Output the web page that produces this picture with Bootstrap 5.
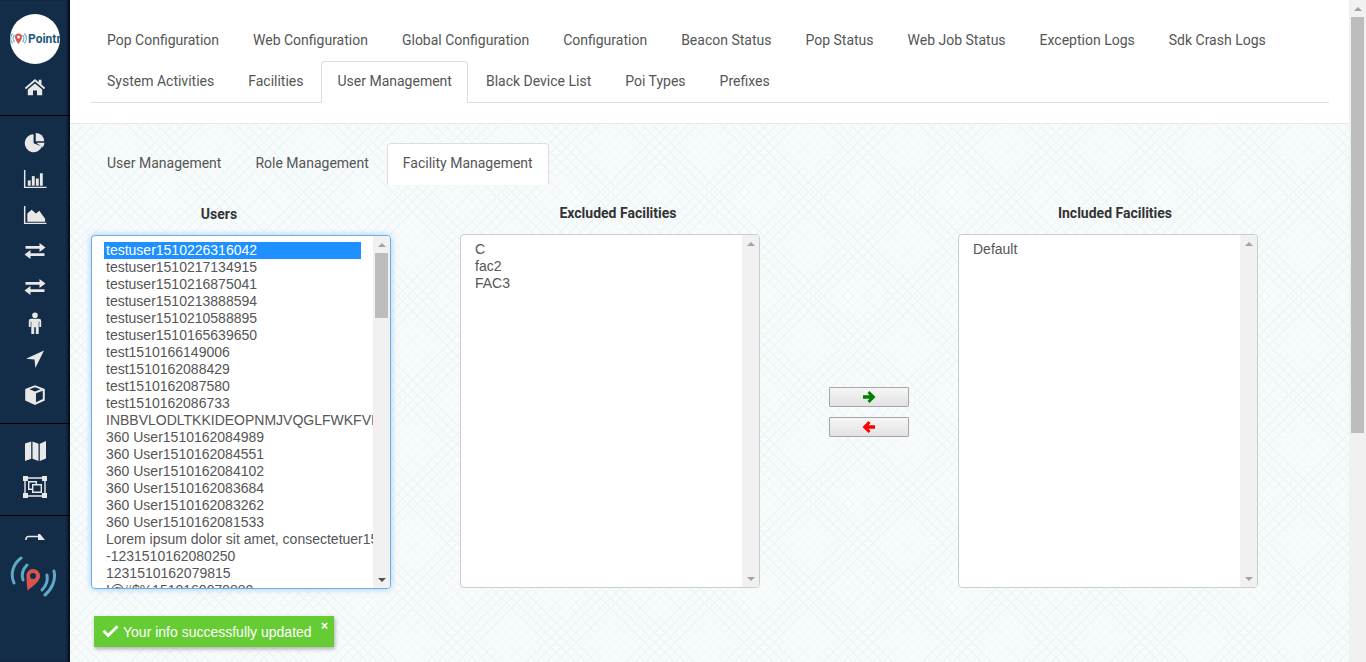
<!DOCTYPE html>
<html lang="en">
<head>
  <meta charset="UTF-8">
  <meta name="viewport" content="width=device-width, initial-scale=1.0">
  <title>User Management - Pointr</title>
  <link href="https://cdn.jsdelivr.net/npm/bootstrap@5.3.0/dist/css/bootstrap.min.css" rel="stylesheet">
  <style>
    html, body { height: 100%; overflow: hidden; }
    body {
      font-family: Roboto, "Liberation Sans", sans-serif;
      font-size: 14px;
      line-height: 20px;
      color: #555;
      background: #fff;
    }
    .page-wrap { height: 662px; }

    /* left rail */
    .side-rail {
      width: 70px;
      flex: none;
      background: #132c47;
      box-shadow: inset -3px 0 3px -1px rgba(0, 0, 0, .75);
      overflow: hidden;
    }
    .rail-group { border-bottom: 1px solid #000; }
    .rail-head { height: 116px; padding-top: 14px; }
    .rail-mid { height: 308px; padding-top: 9px; }
    .rail-maps { height: 92px; padding-top: 9px; }
    .rail-foot { padding-top: 18px; }
    .rail-item { width: 69px; height: 36px; }
    .rail-item svg { width: 24px; height: 24px; fill: #e8e8e8; }
    .rail-clip { width: 69px; height: 6px; overflow: hidden; margin-bottom: 16px; }
    .logo-disc {
      width: 50px;
      height: 50px;
      margin: 0 0 5px 10px;
      border-radius: 50%;
      background: #fff;
      overflow: hidden;
    }
    .logo-disc svg { width: 19px; height: 16px; flex: none; margin-left: -1px; }
    .logo-word {
      font-size: 12px;
      line-height: 16px;
      font-weight: 700;
      color: #25597a;
      white-space: nowrap;
    }
    .pin-logo { width: 46px; height: 42px; margin-left: 10px; display: block; }

    /* main column */
    .top-band {
      background: #fff;
      padding: 20px 20px 20px 21px;
      border-bottom: 1px solid #e8e8e8;
    }
    .hatch-band {
      padding: 19px 0 0 21px;
      background-color: #f8fbfc;
      background-image:
        repeating-linear-gradient(45deg, #eef5f7 0, #eef5f7 1px, transparent 1px, transparent 7px),
        repeating-linear-gradient(-45deg, #eef5f7 0, #eef5f7 1px, transparent 1px, transparent 7px);
    }
    .tab-set { --bs-nav-tabs-border-color: #ddd; }
    .tab-set .nav-link {
      padding: 9px 15px 11px;
      margin-right: 2px;
      color: #555;
      border-radius: 4px 4px 0 0;
    }
    .tab-set .nav-link.active { color: #555; background: #fff; border-color: #ddd #ddd #fff; }
    .tab-set.tab-flat { border-bottom: 0; }

    .pick-col { width: 300px; flex: none; }
    .users-col { padding-top: 20px; margin-right: 69px; }
    .excl-col { padding-top: 19px; }
    .incl-col { padding-top: 19px; }
    .pick-title { font-weight: 700; color: #333; margin-bottom: 11px; text-align: center; white-space: nowrap; }
    .users-col .pick-title { width: 256px; }
    .excl-col .pick-title { width: 316px; }
    .incl-col .pick-title { width: 314px; }
    .move-col { width: 80px; flex: none; margin: 0 49px 0 69px; padding-top: 203px; }

    .pick-box {
      height: 354px;
      background: #fff;
      border: 1px solid #ccc;
      border-radius: 4px;
      overflow: hidden;
      font-family: "Liberation Sans", Arial, sans-serif;
      line-height: 17px;
    }
    .pick-box.is-focused {
      border-color: #66afe9;
      box-shadow: 0 0 6px rgba(102, 175, 233, .6);
    }
    .pick-list { padding: 6px 12px; overflow: hidden; flex: 1 1 0; min-width: 0; }
    .pick-row { padding: 0 2px; white-space: nowrap; color: #555; }
    .pick-row.is-picked { background: #1e90ff; color: #fff; }

    .mini-scroll { width: 17px; flex: none; background: #f1f1f1; }
    .scroll-up, .scroll-down { height: 17px; flex: none; }
    .scroll-up::before, .scroll-down::before {
      content: "";
      border-left: 4px solid transparent;
      border-right: 4px solid transparent;
    }
    .scroll-up::before { border-bottom: 4px solid #a3a3a3; }
    .scroll-down::before { border-top: 4px solid #505050; }
    .scroll-down.is-off::before { border-top-color: #a3a3a3; }
    .scroll-track { flex: 1 1 0; }
    .scroll-thumb { margin: 0 2px; background: #bdbdbd; }
    .list-thumb { height: 65px; }

    .move-btn {
      --bs-btn-padding-y: 0;
      --bs-btn-padding-x: 0;
      width: 80px;
      height: 20px;
      margin-bottom: 10px;
      border: 1px solid #a6a6a6;
      border-radius: 1px;
      background: linear-gradient(#f6f6f6, #e2e2e2);
    }
    .move-btn svg { width: 14px; height: 14px; display: block; }
    .go-right { fill: #008000; }
    .go-left { fill: #ff0000; }

    /* page scrollbar */
    .page-scroll { width: 17px; flex: none; background: #f1f1f1; }
    .page-thumb { height: 416px; margin: 0 2px; background: #bdbdbd; }

    .saved-note {
      left: 94px;
      top: 616px;
      width: 240px;
      height: 31px;
      background: #66cc33;
      color: #fff;
      font-family: "Liberation Sans", Arial, sans-serif;
      box-shadow: 1px 2px 4px rgba(0, 0, 0, .3);
      padding-left: 8px;
    }
    .saved-note svg { width: 17px; height: 17px; margin-right: 4px; fill: #fff; }
    .saved-close {
      right: 6px;
      top: 2px;
      font-size: 12px;
      font-weight: 700;
      line-height: 16px;
    }
  </style>
</head>
<body>
  <div class="page-wrap d-flex">
    <aside class="side-rail d-flex flex-column">
      <div class="rail-group rail-head">
        <div class="logo-disc d-flex align-items-center">
          <svg viewBox="0 0 19 16" aria-hidden="true">
            <g fill="none" stroke="#6fb0cc" stroke-width="1.3">
              <path d="M3.5 2.5a8 8 0 0 0 0 10"/>
              <path d="M15.5 2.5a8 8 0 0 1 0 10"/>
              <path d="M5.6 4a5 5 0 0 0 0 7"/>
              <path d="M13.4 4a5 5 0 0 1 0 7"/>
            </g>
            <path fill="#d9534f" d="M9.500 2.500a3.500 3.500 0 0 1 3.500 3.500c0 2.500-3.500 7-3.500 7s-3.500-4.500-3.500-7a3.500 3.500 0 0 1 3.500-3.500zm0 2a1.500 1.500 0 1 0 0 3 1.500 1.500 0 0 0 0-3z"/>
          </svg>
          <span class="logo-word">Pointr</span>
        </div>
        <div class="rail-item d-flex align-items-center justify-content-center">
          <svg viewBox="0 0 24 24" aria-hidden="true"><path d="M12 4 1.800 12.800l1.200 1.400L12 6.600l9 7.600 1.200-1.400-3.700-3.200V4.800h-2.800v2.500z"/><path d="M4.800 14.500 12 8.400l7.200 6.100v5.700H14v-4.600h-4v4.600H4.800z"/></svg>
        </div>
      </div>
      <div class="rail-group rail-mid">
        <div class="rail-item d-flex align-items-center justify-content-center">
          <svg viewBox="0 0 24 25.500" aria-hidden="true"><path d="M10.500 13V3.500a9.500 9.500 0 1 0 8.900 13z"/><path d="M12.800 2a9 9 0 0 1 9 8.800h-9z"/><path d="M13.400 12.500h8.600a9 9 0 0 1-1.800 5z"/></svg>
        </div>
        <div class="rail-item d-flex align-items-center justify-content-center">
          <svg viewBox="0 0 24 25" aria-hidden="true"><path d="M.500 3H2v17.500h22V22H.500z"/><rect x="4.500" y="14" width="3" height="5.500"/><rect x="8.700" y="9.500" width="3" height="10"/><rect x="12.900" y="12" width="3" height="7.500"/><rect x="17.100" y="6.500" width="3" height="13"/></svg>
        </div>
        <div class="rail-item d-flex align-items-center justify-content-center">
          <svg viewBox="0 0 24 25" aria-hidden="true"><path d="M.500 3H2v17.500h22V22H.500z"/><path d="M4 19.500V11l4.500-4 4.500 4 3.500-3 6 8.500v3z"/></svg>
        </div>
        <div class="rail-item d-flex align-items-center justify-content-center">
          <svg viewBox="0 0 24 24" aria-hidden="true"><path d="M2.500 7h14V4l6 4.500-6 4.500v-3.200h-14z"/><path d="M21.500 14.200h-14V11l-6 4.600 6 4.400v-3h14z"/></svg>
        </div>
        <div class="rail-item d-flex align-items-center justify-content-center">
          <svg viewBox="0 0 24 24" aria-hidden="true"><path d="M2.500 7h14V4l6 4.500-6 4.500v-3.200h-14z"/><path d="M21.500 14.200h-14V11l-6 4.600 6 4.400v-3h14z"/></svg>
        </div>
        <div class="rail-item d-flex align-items-center justify-content-center">
          <svg viewBox="0 0 24 24" aria-hidden="true"><circle cx="12" cy="4.300" r="2.800"/><path d="M8 7.800h8a2.200 2.200 0 0 1 2.200 2.200v6h-1.900v-5.400h-.6V23h-2.900v-6.800h-1.600V23H8.300V10.600h-.6V16H5.800v-6A2.200 2.200 0 0 1 8 7.800z"/></svg>
        </div>
        <div class="rail-item d-flex align-items-center justify-content-center">
          <svg viewBox="0 0 24 24" aria-hidden="true"><path d="M21 3.500 3 11.800l8.500.6.900 8.600z"/></svg>
        </div>
        <div class="rail-item d-flex align-items-center justify-content-center">
          <svg viewBox="0 0 24 24" aria-hidden="true"><path fill-rule="evenodd" d="M12 2.200 21.800 6v11.500L12 22l-9.800-4.500V6zM12 4.300 6.500 6.300 12 8.500l5.500-2.200zM13 10.300v8.900l6.800-3.100V7.700z"/></svg>
        </div>
      </div>
      <div class="rail-group rail-maps">
        <div class="rail-item d-flex align-items-center justify-content-center">
          <svg viewBox="0 0 24 24" aria-hidden="true"><path d="M2 4.500 8.200 2.500v17.300L2 22z"/><path d="M9.500 2.500 15.500 4.700V22l-6-2.200z"/><path d="M16.800 4.700 23 2v17.500L16.800 22z"/></svg>
        </div>
        <div class="rail-item d-flex align-items-center justify-content-center">
          <svg viewBox="0 0 24 24" aria-hidden="true"><path fill-rule="evenodd" d="M0 1h5v1.300h14V1h5v5h-1.300v12H24v5h-5v-1.300H5V23H0v-5h1.300V6H0zM5 3.700V6H2.700v12H5v2.300h14V18h2.300V6H19V3.700z"/><path fill-rule="evenodd" d="M5 6h9v3h5v9H9v-3H5zM6.400 7.400v6.200h2.600V9h3.600V7.400zM10.400 10.400v6.200h7.200v-6.200z"/></svg>
        </div>
      </div>
      <div class="rail-foot">
        <div class="rail-clip d-flex justify-content-center">
          <svg width="22" height="16" viewBox="0 0 22 16" aria-hidden="true"><path fill="none" stroke="#e8e8e8" stroke-width="1.600" d="M2 8V5a2.500 2.500 0 0 1 2.500-2.500H15"/><path fill="#e8e8e8" d="M14 0h2l5 6h-7z"/></svg>
        </div>
        <svg class="pin-logo" viewBox="0 0 46 42" aria-hidden="true">
          <g fill="none" stroke="#5da9c7" stroke-width="3" stroke-linecap="round">
            <path d="M11 2C3 8 0 18 4 27"/>
            <path d="M17 9c-4 4-6 9-4 15"/>
            <path d="M44 15c2 9-2 18-9 24"/>
            <path d="M37 19c1 5-1 11-5 15"/>
          </g>
          <path fill="#d9534f" transform="translate(2 -1)" d="M21 14a7 7 0 0 1 7 7.500C28 27 15.500 35.500 15.500 35.500s-1-9-1-14A6.500 6.500 0 0 1 21 14zm0 4a3 3 0 1 0 0 6 3 3 0 0 0 0-6z"/>
        </svg>
      </div>
    </aside>

    <main class="flex-grow-1 d-flex flex-column overflow-hidden">
      <section class="top-band">
        <ul class="nav nav-tabs tab-set">
          <li class="nav-item"><a class="nav-link" href="#">Pop Configuration</a></li>
          <li class="nav-item"><a class="nav-link" href="#">Web Configuration</a></li>
          <li class="nav-item"><a class="nav-link" href="#">Global Configuration</a></li>
          <li class="nav-item"><a class="nav-link" href="#">Configuration</a></li>
          <li class="nav-item"><a class="nav-link" href="#">Beacon Status</a></li>
          <li class="nav-item"><a class="nav-link" href="#">Pop Status</a></li>
          <li class="nav-item"><a class="nav-link" href="#">Web Job Status</a></li>
          <li class="nav-item"><a class="nav-link" href="#">Exception Logs</a></li>
          <li class="nav-item"><a class="nav-link" href="#">Sdk Crash Logs</a></li>
          <li class="nav-item"><a class="nav-link" href="#">System Activities</a></li>
          <li class="nav-item"><a class="nav-link" href="#">Facilities</a></li>
          <li class="nav-item"><a class="nav-link active" href="#">User Management</a></li>
          <li class="nav-item"><a class="nav-link" href="#">Black Device List</a></li>
          <li class="nav-item"><a class="nav-link" href="#">Poi Types</a></li>
          <li class="nav-item"><a class="nav-link" href="#">Prefixes</a></li>
        </ul>
      </section>

      <section class="hatch-band flex-grow-1">
        <ul class="nav nav-tabs tab-set tab-flat">
          <li class="nav-item"><a class="nav-link" href="#">User Management</a></li>
          <li class="nav-item"><a class="nav-link" href="#">Role Management</a></li>
          <li class="nav-item"><a class="nav-link active" href="#">Facility Management</a></li>
        </ul>

        <div class="d-flex">
          <div class="pick-col users-col">
            <div class="pick-title">Users</div>
            <div class="pick-box is-focused d-flex">
              <div class="pick-list">
                <div class="pick-row is-picked">testuser1510226316042</div>
                <div class="pick-row">testuser1510217134915</div>
                <div class="pick-row">testuser1510216875041</div>
                <div class="pick-row">testuser1510213888594</div>
                <div class="pick-row">testuser1510210588895</div>
                <div class="pick-row">testuser1510165639650</div>
                <div class="pick-row">test1510166149006</div>
                <div class="pick-row">test1510162088429</div>
                <div class="pick-row">test1510162087580</div>
                <div class="pick-row">test1510162086733</div>
                <div class="pick-row">INBBVLODLTKKIDEOPNMJVQGLFWKFVIUKHGTQ</div>
                <div class="pick-row">360 User1510162084989</div>
                <div class="pick-row">360 User1510162084551</div>
                <div class="pick-row">360 User1510162084102</div>
                <div class="pick-row">360 User1510162083684</div>
                <div class="pick-row">360 User1510162083262</div>
                <div class="pick-row">360 User1510162081533</div>
                <div class="pick-row">Lorem ipsum dolor sit amet, consectetuer1510162080</div>
                <div class="pick-row">-1231510162080250</div>
                <div class="pick-row">1231510162079815</div>
                <div class="pick-row">!@#$%1510160079880</div>
              </div>
              <div class="mini-scroll d-flex flex-column">
                <div class="scroll-up d-flex align-items-center justify-content-center"></div>
                <div class="scroll-track"><div class="scroll-thumb list-thumb"></div></div>
                <div class="scroll-down d-flex align-items-center justify-content-center"></div>
              </div>
            </div>
          </div>

          <div class="pick-col excl-col">
            <div class="pick-title">Excluded Facilities</div>
            <div class="pick-box d-flex">
              <div class="pick-list">
                <div class="pick-row">C</div>
                <div class="pick-row">fac2</div>
                <div class="pick-row">FAC3</div>
              </div>
              <div class="mini-scroll d-flex flex-column">
                <div class="scroll-up d-flex align-items-center justify-content-center"></div>
                <div class="scroll-track"></div>
                <div class="scroll-down is-off d-flex align-items-center justify-content-center"></div>
              </div>
            </div>
          </div>

          <div class="move-col">
            <button type="button" class="btn move-btn d-flex align-items-center justify-content-center">
              <svg class="go-right" viewBox="0 0 14 14" aria-hidden="true"><path d="M7.500 1 13.500 7l-6 6-2-2L7.500 8.700H1V5.300h6.500L5.500 3z"/></svg>
            </button>
            <button type="button" class="btn move-btn d-flex align-items-center justify-content-center">
              <svg class="go-left" viewBox="0 0 14 14" aria-hidden="true"><path d="M6.500 1 .5 7l6 6 2-2L6.500 8.700H13V5.300H6.500L8.500 3z"/></svg>
            </button>
          </div>

          <div class="pick-col incl-col">
            <div class="pick-title">Included Facilities</div>
            <div class="pick-box d-flex">
              <div class="pick-list">
                <div class="pick-row">Default</div>
              </div>
              <div class="mini-scroll d-flex flex-column">
                <div class="scroll-up d-flex align-items-center justify-content-center"></div>
                <div class="scroll-track"></div>
                <div class="scroll-down is-off d-flex align-items-center justify-content-center"></div>
              </div>
            </div>
          </div>
        </div>
      </section>
    </main>

    <div class="page-scroll d-flex flex-column">
      <div class="scroll-up d-flex align-items-center justify-content-center"></div>
      <div class="page-thumb"></div>
    </div>
  </div>

  <div class="saved-note position-absolute d-flex align-items-center">
    <svg viewBox="0 0 17 17" aria-hidden="true"><path d="M6.200 14.500.500 8.800l2-2 3.700 3.700L14.500 2.200l2 2z"/></svg>
    <span>Your info successfully updated</span>
    <span class="saved-close position-absolute">×</span>
  </div>

  <script src="https://cdn.jsdelivr.net/npm/bootstrap@5.3.0/dist/js/bootstrap.bundle.min.js"></script>
</body>
</html>
